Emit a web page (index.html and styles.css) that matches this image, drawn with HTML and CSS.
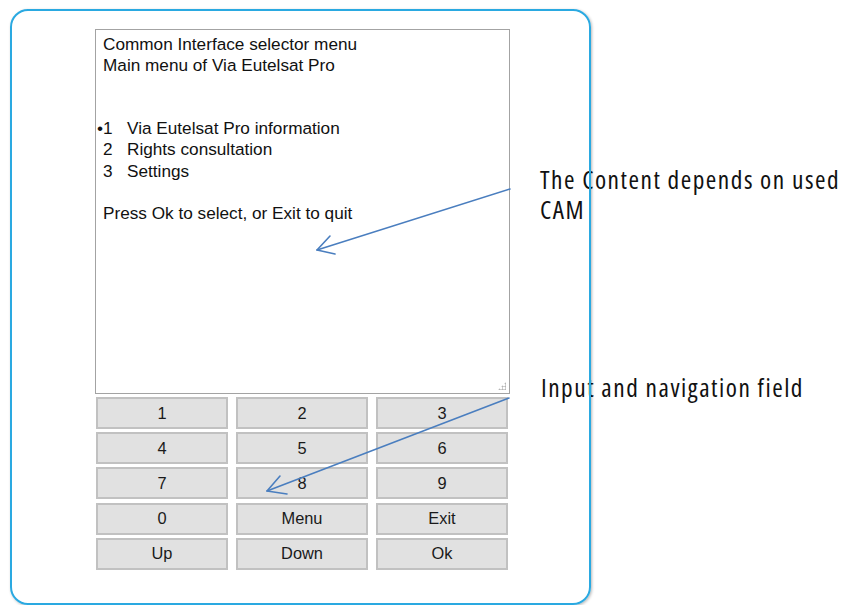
FILE: index.html
```html
<!DOCTYPE html>
<html>
<head>
<meta charset="utf-8">
<link rel="stylesheet" href="styles.css">
</head>
<body>
<div class="page">
  <div class="frame">
    <div class="screen">
      <div class="line">Common Interface selector menu</div>
      <div class="line">Main menu of Via Eutelsat Pro</div>
      <div class="line"></div>
      <div class="line"></div>
      <div class="line item"><span class="num"><span class="bullet">•</span>1</span><span>Via Eutelsat Pro information</span></div>
      <div class="line item"><span class="num">2</span><span>Rights consultation</span></div>
      <div class="line item"><span class="num">3</span><span>Settings</span></div>
      <div class="line"></div>
      <div class="line">Press Ok to select, or Exit to quit</div>
      <div class="grip"></div>
    </div>
    <div class="keypad">
      <div class="key">1</div><div class="key">2</div><div class="key">3</div>
      <div class="key">4</div><div class="key">5</div><div class="key">6</div>
      <div class="key">7</div><div class="key">8</div><div class="key">9</div>
      <div class="key">0</div><div class="key">Menu</div><div class="key">Exit</div>
      <div class="key">Up</div><div class="key">Down</div><div class="key">Ok</div>
    </div>
  </div>
  <div class="note note-content">The Content depends on used<br>CAM</div>
  <div class="note note-input">Input and navigation field</div>
  <div class="frame-edge"></div>
  <svg class="arrows" width="844" height="605" viewBox="0 0 844 605">
    <g fill="none" stroke="#4a7ebf" stroke-width="1.6" stroke-linecap="round" stroke-linejoin="round">
      <line x1="510" y1="189" x2="317" y2="250"/>
      <polyline points="330,236 317,250 335,254"/>
      <line x1="509" y1="398" x2="267" y2="491"/>
      <polyline points="280,476 267,491 287,494"/>
    </g>
  </svg>
</div>
</body>
</html>
```
FILE: styles.css
```css
html, body {
  margin: 0;
  padding: 0;
  background: #ffffff;
}
.page {
  position: relative;
  width: 844px;
  height: 605px;
  overflow: hidden;
}
.frame {
  margin: 9px 0 0 10px;
  width: 581px;
  height: 596px;
  box-sizing: border-box;
  padding: 20px 0 0 85px;
  display: flex;
  flex-direction: column;
  gap: 3px;
}
.frame-edge {
  position: absolute;
  left: 10px;
  top: 9px;
  width: 581px;
  height: 596px;
  box-sizing: border-box;
  border: 2px solid #2aa9e1;
  border-radius: 18px;
  box-shadow: 1px 1px 3px rgba(0, 0, 0, 0.28);
  z-index: 3;
  pointer-events: none;
}
.screen {
  position: relative;
  width: 415px;
  height: 365px;
  box-sizing: border-box;
  border: 1px solid #a3a3a3;
  padding: 4px 0 0 7px;
  font-family: "Liberation Sans", Arial, sans-serif;
  font-size: 17.2px;
  line-height: 21.1px;
  color: #111111;
}
.line {
  height: 21.1px;
  white-space: nowrap;
}
.item {
  display: flex;
}
.num {
  position: relative;
  width: 24px;
}
.bullet {
  position: absolute;
  left: -6px;
  top: 0;
}
.grip {
  position: absolute;
  right: 3px;
  bottom: 3px;
  width: 8px;
  height: 8px;
  background:
    radial-gradient(circle, #b5b5b5 0.9px, transparent 1.2px) 0 0 / 3px 3px;
  clip-path: polygon(100% 0, 100% 100%, 0 100%);
}
.keypad {
  display: grid;
  grid-template-columns: repeat(3, 132px);
  grid-auto-rows: 32px;
  column-gap: 8px;
  row-gap: 3.2px;
  margin-left: 1px;
}
.key {
  box-sizing: border-box;
  border: 2px solid #c1c1c1;
  background: #e1e1e1;
  display: flex;
  align-items: center;
  justify-content: center;
  font-family: "Liberation Sans", Arial, sans-serif;
  font-size: 16.4px;
  color: #1a1a1a;
}
.note {
  position: absolute;
  font-family: "Open Sans", sans-serif;
  font-stretch: condensed;
  font-size: 25.4px;
  letter-spacing: 1.5px;
  line-height: 30px;
  color: #111111;
  white-space: nowrap;
  z-index: 1;
}
.note-content {
  left: 540px;
  top: 164px;
}
.note-input {
  left: 541px;
  top: 372px;
}
.arrows {
  position: absolute;
  left: 0;
  top: 0;
  z-index: 4;
  pointer-events: none;
}
```
